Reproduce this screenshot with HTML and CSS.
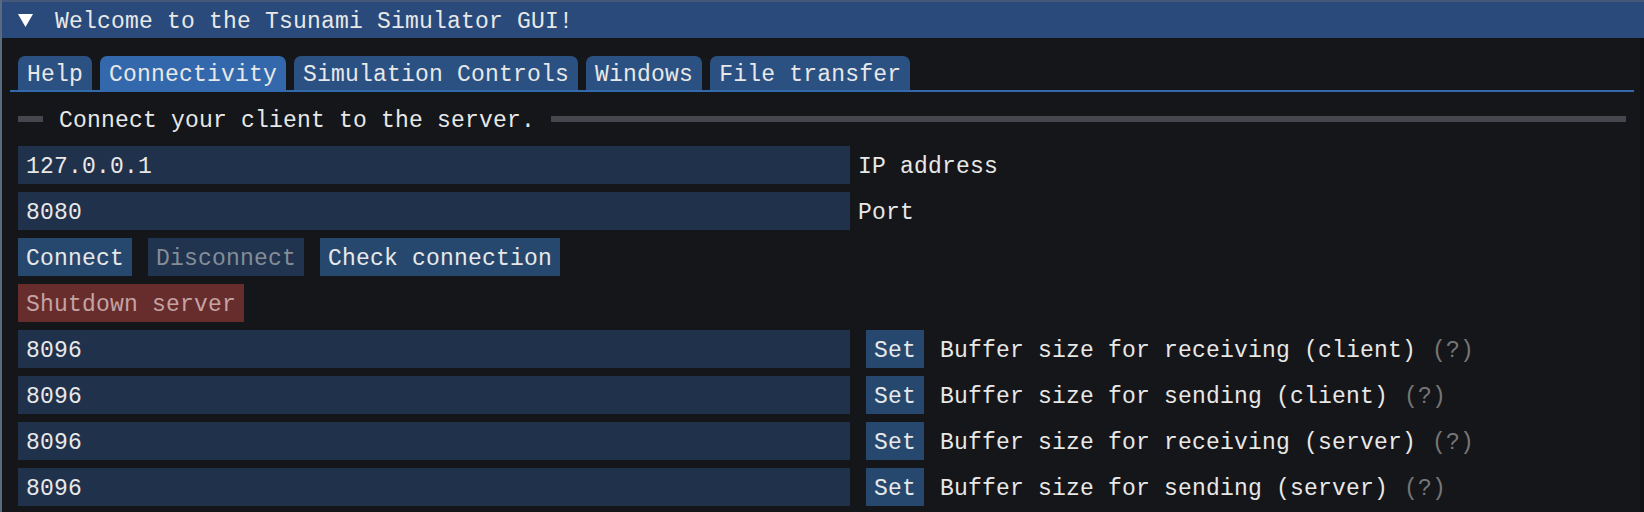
FILE: index.html
```html
<!DOCTYPE html>
<html>
<head>
<meta charset="utf-8">
<link rel="stylesheet" href="styles.css">
</head>
<body>
<div class="window">
  <div class="titlebar">
    <svg class="arrow" width="15" height="13" viewBox="0 0 15 13"><polygon points="0,0 15,0 7.5,13" fill="#ffffff"/></svg>
    <span class="title">Welcome to the Tsunami Simulator GUI!</span>
  </div>
  <div class="body">
    <div class="tabbar">
      <div class="tab">Help</div>
      <div class="tab active">Connectivity</div>
      <div class="tab">Simulation Controls</div>
      <div class="tab">Windows</div>
      <div class="tab">File transfer</div>
    </div>
    <div class="septext">
      <span class="sep-dash"></span>
      <span class="sep-label">Connect your client to the server.</span>
      <span class="sep-line"></span>
    </div>
    <div class="row">
      <div class="field">127.0.0.1</div>
      <span class="label">IP address</span>
    </div>
    <div class="row">
      <div class="field">8080</div>
      <span class="label">Port</span>
    </div>
    <div class="row buttons">
      <div class="btn">Connect</div>
      <div class="btn disabled">Disconnect</div>
      <div class="btn">Check connection</div>
    </div>
    <div class="row">
      <div class="btn danger">Shutdown server</div>
    </div>
    <div class="row">
      <div class="field">8096</div>
      <div class="btn set">Set</div>
      <span class="label wide">Buffer size for receiving (client)</span><span class="help">(?)</span>
    </div>
    <div class="row">
      <div class="field">8096</div>
      <div class="btn set">Set</div>
      <span class="label wide">Buffer size for sending (client)</span><span class="help">(?)</span>
    </div>
    <div class="row">
      <div class="field">8096</div>
      <div class="btn set">Set</div>
      <span class="label wide">Buffer size for receiving (server)</span><span class="help">(?)</span>
    </div>
    <div class="row">
      <div class="field">8096</div>
      <div class="btn set">Set</div>
      <span class="label wide">Buffer size for sending (server)</span><span class="help">(?)</span>
    </div>
  </div>
</div>
</body>
</html>
```
FILE: styles.css
```css
* { box-sizing: border-box; }
html, body {
  margin: 0;
  padding: 0;
  background: #151619;
}
body {
  width: 1644px;
  height: 512px;
  overflow: hidden;
  font-family: "Liberation Mono", "DejaVu Sans Mono", monospace;
  font-size: 23px;
  letter-spacing: 0.2px;
  color: #e8e8e8;
}
.window {
  width: 1644px;
  height: 512px;
  display: flex;
  flex-direction: column;
  border-left: 2px solid #5a6a80;
}
.titlebar {
  height: 38px;
  flex: none;
  background: #294a7a;
  border-top: 2px solid #45587a;
  display: flex;
  align-items: center;
  padding-left: 16px;
}
.arrow {
  display: block;
  margin-right: 22px;
  margin-top: 1px;
}
.title {
  white-space: pre;
  padding-top: 3px;
}
.body {
  flex: 1;
  padding: 18px 14px 0 16px;
  border-right: 4px solid #0f1012;
  display: flex;
  flex-direction: column;
  gap: 8px;
}
.tabbar {
  display: flex;
  gap: 8px;
  margin: 0 -8px;
  padding: 0 8px;
  border-bottom: 2px solid #3369ad;
}
.tab {
  height: 34px;
  padding: 4px 9px 0;
  background: #2b5183;
  border-radius: 7px 7px 0 0;
  display: flex;
  align-items: center;
  white-space: pre;
}
.tab.active {
  background: #3468ad;
}
.septext {
  height: 38px;
  display: flex;
  align-items: center;
}
.sep-dash {
  width: 25px;
  height: 6px;
  background: #46464f;
  margin-right: 16px;
}
.sep-label {
  white-space: pre;
  padding-top: 4px;
}
.sep-line {
  flex: 1;
  height: 6px;
  background: #46464f;
  margin-left: 16px;
}
.row {
  height: 38px;
  display: flex;
  align-items: center;
}
.buttons {
  gap: 16px;
}
.field {
  width: 832px;
  height: 38px;
  background: #20314c;
  display: flex;
  align-items: center;
  padding: 4px 0 0 8px;
  white-space: pre;
}
.label {
  margin-left: 8px;
  padding-top: 4px;
  white-space: pre;
}
.label.wide {
  margin-left: 16px;
}
.help {
  margin-left: 16px;
  padding-top: 4px;
  color: #767676;
}
.btn {
  height: 38px;
  padding: 4px 8px 0;
  background: #26486f;
  display: flex;
  align-items: center;
  white-space: pre;
}
.btn.set {
  margin-left: 16px;
}
.btn.disabled {
  background: #203450;
  color: #858d97;
}
.btn.danger {
  background: #672d2d;
  color: #c4a3a3;
}
```
